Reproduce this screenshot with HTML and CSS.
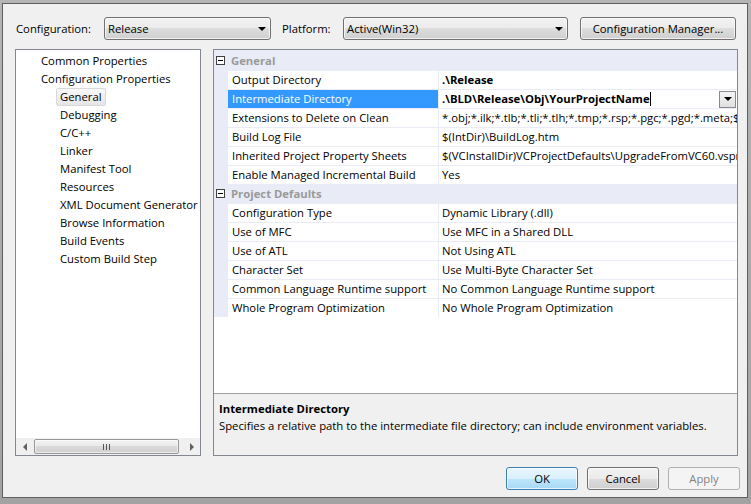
FILE: index.html
```html
<!DOCTYPE html>
<html>
<head>
<meta charset="utf-8">
<title>Property Pages</title>
<link rel="stylesheet" href="styles.css">
</head>
<body>
<div class="dialog">
  <div class="toolbar">
    <span class="lbl lbl-config">Configuration:</span>
    <div class="combo combo-config"><span class="combo-text">Release</span><span class="tri"></span></div>
    <span class="lbl lbl-platform">Platform:</span>
    <div class="combo combo-platform"><span class="combo-text">Active(Win32)</span><span class="tri"></span></div>
    <div class="btn btn-cfgmgr">Configuration Manager...</div>
  </div>

  <div class="main">
    <div class="tree">
      <ul class="tree-list">
        <li class="lvl1"><span class="node">Common Properties</span></li>
        <li class="lvl1"><span class="node">Configuration Properties</span></li>
        <li class="lvl2"><span class="node selected">General</span></li>
        <li class="lvl2"><span class="node">Debugging</span></li>
        <li class="lvl2"><span class="node">C/C++</span></li>
        <li class="lvl2"><span class="node">Linker</span></li>
        <li class="lvl2"><span class="node">Manifest Tool</span></li>
        <li class="lvl2"><span class="node">Resources</span></li>
        <li class="lvl2"><span class="node">XML Document Generator</span></li>
        <li class="lvl2"><span class="node">Browse Information</span></li>
        <li class="lvl2"><span class="node">Build Events</span></li>
        <li class="lvl2"><span class="node">Custom Build Step</span></li>
      </ul>
      <div class="hscroll">
        <div class="sb-arrow"><span class="tri-left"></span></div>
        <div class="sb-track">
          <div class="sb-thumb"><span class="grip"></span><span class="grip"></span><span class="grip"></span></div>
        </div>
        <div class="sb-arrow"><span class="tri-right"></span></div>
      </div>
    </div>

    <div class="props">
      <div class="grid">
        <div class="cat cat-first"><span class="exp"></span><span class="cat-name">General</span></div>
        <div class="row"><div class="name">Output Directory</div><div class="val bold">.\Release</div></div>
        <div class="row"><div class="name sel">Intermediate Directory</div><div class="val bold editing"><span>.\BLD\Release\Obj\YourProjectName</span><span class="caret"></span><span class="dd-btn"><span class="tri tri-small"></span></span></div></div>
        <div class="row"><div class="name">Extensions to Delete on Clean</div><div class="val">*.obj;*.ilk;*.tlb;*.tli;*.tlh;*.tmp;*.rsp;*.pgc;*.pgd;*.meta;$(TargetPath)</div></div>
        <div class="row"><div class="name">Build Log File</div><div class="val">$(IntDir)\BuildLog.htm</div></div>
        <div class="row"><div class="name">Inherited Project Property Sheets</div><div class="val">$(VCInstallDir)VCProjectDefaults\UpgradeFromVC60.vsprops</div></div>
        <div class="row"><div class="name">Enable Managed Incremental Build</div><div class="val">Yes</div></div>
        <div class="cat"><span class="exp"></span><span class="cat-name">Project Defaults</span></div>
        <div class="row"><div class="name">Configuration Type</div><div class="val">Dynamic Library (.dll)</div></div>
        <div class="row"><div class="name">Use of MFC</div><div class="val">Use MFC in a Shared DLL</div></div>
        <div class="row"><div class="name">Use of ATL</div><div class="val">Not Using ATL</div></div>
        <div class="row"><div class="name">Character Set</div><div class="val">Use Multi-Byte Character Set</div></div>
        <div class="row"><div class="name">Common Language Runtime support</div><div class="val">No Common Language Runtime support</div></div>
        <div class="row"><div class="name">Whole Program Optimization</div><div class="val">No Whole Program Optimization</div></div>
      </div>
      <div class="desc">
        <div class="desc-title">Intermediate Directory</div>
        <div class="desc-text">Specifies a relative path to the intermediate file directory; can include environment variables.</div>
      </div>
    </div>
  </div>

  <div class="buttons">
    <div class="btn btn-ok">OK</div>
    <div class="btn">Cancel</div>
    <div class="btn btn-disabled">Apply</div>
  </div>
</div>
</body>
</html>
```

FILE: styles.css
```css
* { box-sizing: border-box; }
html, body { margin: 0; padding: 0; }
body {
  width: 751px;
  height: 504px;
  overflow: hidden;
  background: linear-gradient(to bottom, #b4b4b4, #a2a2a2);
  font-family: "Open Sans", "Noto Sans", sans-serif;
  font-size: 11.3px;
  color: #000;
}
.dialog {
  margin: 3px 0 0 2px;
  width: 746px;
  height: 495px;
  border: 1px solid #5f5f5f;
  background: #f0f0f0;
  display: flex;
  flex-direction: column;
  padding-top: 13px;
}

/* toolbar */
.toolbar {
  display: flex;
  align-items: center;
  height: 23px;
  padding-left: 13px;
}
.lbl { white-space: nowrap; }
.lbl-config { width: 88px; }
.lbl-platform { width: 61px; margin-left: 11px; }
.combo, .btn {
  height: 23px;
  border: 1px solid #707070;
  border-radius: 3px;
  background: linear-gradient(to bottom, #f2f2f2 0%, #ebebeb 50%, #dddddd 50%, #cfcfcf 100%);
  box-shadow: inset 0 0 0 1px rgba(255,255,255,0.7);
}
.combo {
  display: flex;
  align-items: center;
  justify-content: space-between;
  padding: 0 4px 0 3px;
}
.combo-config { width: 167px; }
.combo-platform { width: 225px; }
.tri {
  width: 0; height: 0;
  border-left: 4px solid transparent;
  border-right: 4px solid transparent;
  border-top: 4px solid #000;
}
.btn {
  display: flex;
  align-items: center;
  justify-content: center;
  white-space: nowrap;
}
.btn-cfgmgr { width: 156px; margin-left: 12px; }

/* main */
.main {
  display: flex;
  margin-top: 9px;
  height: 407px;
  padding-left: 12px;
}
.tree {
  width: 186px;
  border: 1px solid #828790;
  background: #fff;
  display: flex;
  flex-direction: column;
}
.tree-list {
  flex: 1;
  list-style: none;
  margin: 0;
  padding: 2px 0 0 0;
  overflow: hidden;
}
.tree-list li {
  height: 18px;
  white-space: nowrap;
}
.lvl1 { padding-left: 21px; }
.lvl2 { padding-left: 40px; }
.node {
  display: inline-block;
  height: 18px;
  line-height: 16px;
  padding: 0 3px;
  border: 1px solid transparent;
  border-radius: 2px;
}
.node.selected {
  border-color: #d9d9d9;
  background: linear-gradient(to bottom, #f8f8f8, #e5e5e5);
}
.hscroll {
  height: 17px;
  display: flex;
  background: #f0f0f0;
}
.sb-arrow {
  width: 17px;
  display: flex;
  align-items: center;
  justify-content: center;
}
.tri-left {
  width: 0; height: 0;
  border-top: 4px solid transparent;
  border-bottom: 4px solid transparent;
  border-right: 4px solid #606060;
}
.tri-right {
  width: 0; height: 0;
  border-top: 4px solid transparent;
  border-bottom: 4px solid transparent;
  border-left: 4px solid #606060;
}
.sb-track {
  flex: 1;
  padding: 0 1px;
  display: flex;
  align-items: center;
}
.sb-thumb {
  width: 145px;
  height: 15px;
  border: 1px solid #979797;
  border-radius: 2px;
  background: linear-gradient(to bottom, #f3f3f3, #e8e8e8 50%, #d9d9d9 50%, #d0d0d0);
  box-shadow: inset 0 0 0 1px rgba(255,255,255,0.6);
  display: flex;
  align-items: center;
  justify-content: center;
  gap: 2px;
}
.grip {
  width: 1px;
  height: 6px;
  background: #555;
}

/* property grid */
.props {
  width: 525px;
  margin-left: 12px;
  border: 1px solid #828790;
  background: #fff;
  display: flex;
  flex-direction: column;
}
.grid {
  height: 343px;
  overflow: hidden;
  background: #fff;
}
.cat {
  height: 19px;
  background: #e9ecf6;
  display: flex;
  align-items: center;
}
.cat-first { height: 20px; }
.exp {
  width: 9px;
  height: 9px;
  margin-left: 2px;
  border: 1px solid #404040;
  background: #fff;
  display: flex;
  align-items: center;
  justify-content: center;
}
.exp::before {
  content: "";
  width: 5px;
  height: 1px;
  background: #000;
}
.cat-name {
  margin-left: 6px;
  font-weight: bold;
  color: #9a9a9a;
}
.row {
  height: 19px;
  background: #e9ecf6;
  padding-top: 1px;
  display: flex;
}
.name {
  width: 210px;
  margin-left: 14px;
  background: #fff;
  padding-left: 4px;
  line-height: 18px;
  white-space: nowrap;
  overflow: hidden;
}
.name.sel {
  background: #3399ff;
  color: #fff;
}
.val {
  flex: 1;
  margin-left: 1px;
  background: #fff;
  padding-left: 3px;
  line-height: 18px;
  white-space: nowrap;
  overflow: hidden;
}
.bold { font-weight: bold; }
.editing {
  display: flex;
  align-items: center;
}
.caret {
  width: 1px;
  height: 14px;
  background: #000;
}
.dd-btn {
  margin-left: auto;
  margin-right: 1px;
  width: 17px;
  height: 17px;
  border: 1px solid #8a8a8a;
  background: linear-gradient(to bottom, #f5f5f5, #e0e0e0);
  display: flex;
  align-items: center;
  justify-content: center;
}
.desc {
  flex: 1;
  border-top: 1px solid #a0a0a0;
  background: #f0f0f0;
  padding: 6px 5px 0 5px;
  line-height: 17px;
}
.desc-title { font-weight: bold; }

/* buttons */
.buttons {
  display: flex;
  justify-content: flex-end;
  gap: 9px;
  margin-top: 11px;
  padding-right: 7px;
}
.buttons .btn { width: 72px; }
.btn-ok {
  border-color: #3c7fb1;
  background: linear-gradient(to bottom, #eaf6fd 0%, #d9f0fc 50%, #bee6fd 50%, #a7d9f5 100%);
}
.btn-disabled {
  border-color: #adb2b5;
  background: #f4f4f4;
  box-shadow: none;
  color: #838383;
}
```
